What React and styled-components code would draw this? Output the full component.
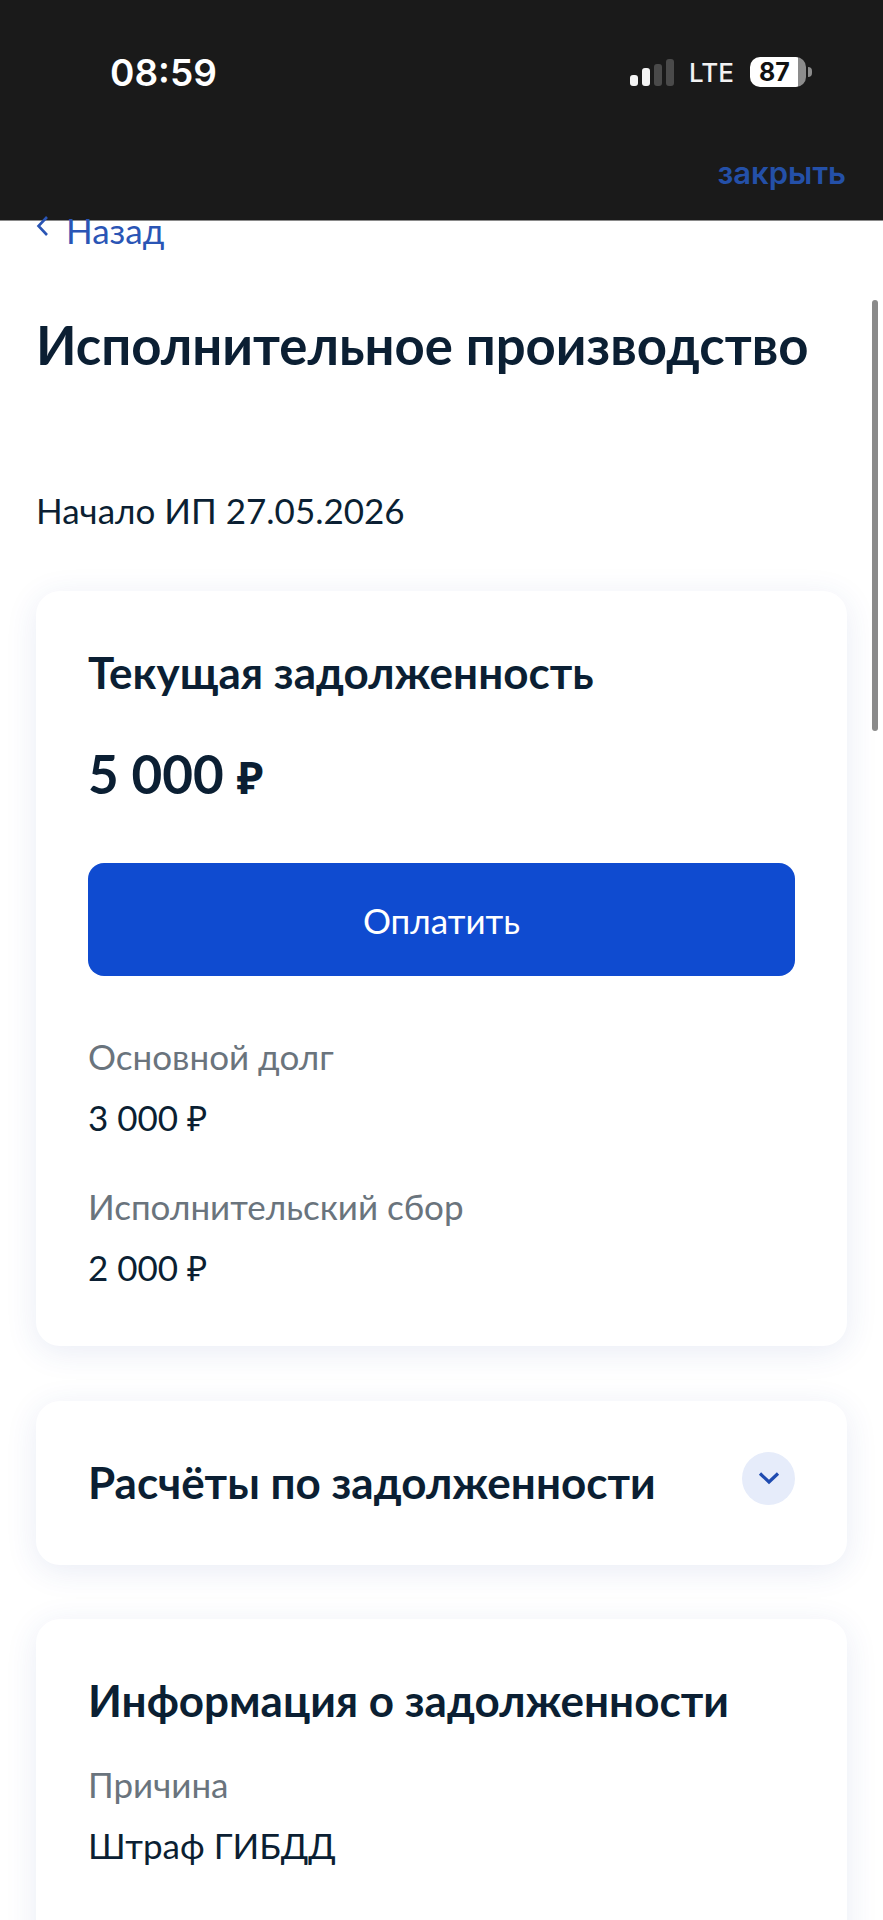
import styled, { createGlobalStyle } from "styled-components";

const GlobalStyle = createGlobalStyle`
  html, body {
    margin: 0;
    padding: 0;
    background: #fff;
  }
  body {
    font-family: "Lato", "Noto Sans", sans-serif;
    color: #0b1f33;
  }
`;

const App = () => {
  return (
    <Page>
      <GlobalStyle />
      <TopBar>
        <StatusRow>
          <Time>08:59</Time>
          <StatusIcons>
            <Signal>
              <Bar h={11} on={true} />
              <Bar h={18} on={true} />
              <Bar h={22} />
              <Bar h={27} />
            </Signal>
            <Lte>LTE</Lte>
            <Battery>
              <BatteryBody>87</BatteryBody>
              <BatteryCap />
            </Battery>
          </StatusIcons>
        </StatusRow>
        <CloseRow>
          <CloseLink>закрыть</CloseLink>
        </CloseRow>
      </TopBar>
      <Content>
        <Back>
          <svg width="16" height="22" viewBox="0 0 16 22" fill="none">
            <path d="M12 2L3.5 11L12 20" stroke="#2a55b5" strokeWidth="2.6" />
          </svg>
          <span>Назад</span>
        </Back>
        <Title>Исполнительное производство</Title>
        <StartDate>Начало ИП 27.05.2026</StartDate>
        <Card>
          <CardTitle>Текущая задолженность</CardTitle>
          <Amount>
            5 000 <span>₽</span>
          </Amount>
          <PayButton>Оплатить</PayButton>
          <Label>Основной долг</Label>
          <Value>3 000 ₽</Value>
          <Label top={49}>Исполнительский сбор</Label>
          <Value>2 000 ₽</Value>
        </Card>
        <AccordionCard>
          <SectionTitle>Расчёты по задолженности</SectionTitle>
          <ChevronCircle>
            <svg width="22" height="14" viewBox="0 0 22 14" fill="none">
              <path d="M2 2.5L11 11L20 2.5" stroke="#1f4bb0" strokeWidth="3.2" />
            </svg>
          </ChevronCircle>
        </AccordionCard>
        <InfoCard>
          <SectionTitle>Информация о задолженности</SectionTitle>
          <Label top={40}>Причина</Label>
          <Value>Штраф ГИБДД</Value>
        </InfoCard>
      </Content>
      <Scrollbar />
    </Page>
  );
};

const Page = styled.div`
  position: relative;
  width: 883px;
  height: 1920px;
  overflow: hidden;
  background: #fff;
`;
const TopBar = styled.div`
  height: 221px;
  box-sizing: border-box;
  background: #1a1a1a;
  border-bottom: 1px solid #8a8a8a;
  display: flex;
  flex-direction: column;
`;
const StatusRow = styled.div`
  display: flex;
  justify-content: space-between;
  align-items: center;
  padding: 48px 71px 0 110px;
  height: 48px;
`;
const Time = styled.div`
  font-family: "Inter", sans-serif;
  font-size: 37px;
  font-weight: 600;
  color: #fff;
`;
const StatusIcons = styled.div`
  display: flex;
  align-items: center;
  gap: 15px;
`;
const Signal = styled.div`
  display: flex;
  align-items: flex-end;
  gap: 4px;
  height: 27px;
`;
const Bar = styled.div`
  width: 8px;
  height: ${(props) => props.h}px;
  border-radius: 3px;
  background: ${(props) => (props.on ? "#f4f4f4" : "#4a4a4a")};
`;
const Lte = styled.div`
  font-family: "Inter", sans-serif;
  font-size: 26px;
  font-weight: 500;
  color: #f2f2f2;
`;
const Battery = styled.div`
  display: flex;
  align-items: center;
  gap: 2px;
  margin-left: 1px;
`;
const BatteryBody = styled.div`
  width: 56px;
  height: 30px;
  border-radius: 10px;
  background: linear-gradient(90deg, #fff 86%, #8c8c8c 86%);
  color: #111;
  font-family: "Inter", sans-serif;
  font-size: 25px;
  font-weight: 700;
  line-height: 30px;
  padding-left: 9px;
  box-sizing: border-box;
`;
const BatteryCap = styled.div`
  width: 4px;
  height: 10px;
  border-radius: 0 4px 4px 0;
  background: #8c8c8c;
`;
const CloseRow = styled.div`
  display: flex;
  justify-content: flex-end;
  padding: 58px 37px 0 0;
`;
const CloseLink = styled.div`
  font-family: "Inter", sans-serif;
  font-size: 31px;
  font-weight: 600;
  color: #2450a8;
`;
const Content = styled.div`
  padding: 0 36px;
`;
const Back = styled.div`
  display: flex;
  align-items: flex-start;
  gap: 15px;
  height: 36px;
  margin-top: -11px;
  margin-left: -1px;
  font-size: 35px;
  line-height: 40px;
  color: #2a55b5;
  & > svg {
    margin-top: 5px;
  }
`;
const Title = styled.h1`
  margin: 69px 0 0;
  font-size: 52.7px;
  line-height: 60px;
  font-weight: 700;
  color: #0b1f33;
`;
const StartDate = styled.div`
  margin-top: 115px;
  font-size: 35px;
  line-height: 40px;
`;
const Card = styled.div`
  margin-top: 61px;
  padding: 57px 52px 0;
  height: 755px;
  box-sizing: border-box;
  background: #fff;
  border-radius: 24px;
  box-shadow: 0 6px 32px rgba(35, 70, 160, 0.1);
`;
const CardTitle = styled.div`
  font-size: 44px;
  line-height: 48px;
  font-weight: 700;
`;
const Amount = styled.div`
  margin-top: 46px;
  font-size: 53px;
  line-height: 64px;
  font-weight: 700;
  & > span {
    font-family: "Noto Sans", sans-serif;
    font-size: 44px;
  }
`;
const PayButton = styled.div`
  margin-top: 54px;
  height: 113px;
  border-radius: 16px;
  background: #0f4bd0;
  color: #fff;
  font-size: 35px;
  display: flex;
  align-items: center;
  justify-content: center;
`;
const Label = styled.div`
  margin-top: ${(props) => props.top || 60}px;
  font-size: 35px;
  line-height: 40px;
  color: #6a747d;
`;
const Value = styled.div`
  margin-top: 21px;
  font-size: 35px;
  line-height: 40px;
  color: #0b1f33;
`;
const AccordionCard = styled.div`
  margin-top: 55px;
  height: 164px;
  padding: 0 52px 3px;
  box-sizing: border-box;
  background: #fff;
  border-radius: 24px;
  box-shadow: 0 6px 32px rgba(35, 70, 160, 0.1);
  display: flex;
  align-items: center;
  justify-content: space-between;
`;
const SectionTitle = styled.div`
  font-size: 44px;
  line-height: 48px;
  font-weight: 700;
`;
const ChevronCircle = styled.div`
  width: 53px;
  height: 53px;
  margin-top: -7px;
  border-radius: 50%;
  background: #e6ecfa;
  display: flex;
  align-items: center;
  justify-content: center;
`;
const InfoCard = styled.div`
  margin-top: 54px;
  padding: 57px 52px 60px;
  height: 400px;
  box-sizing: border-box;
  background: #fff;
  border-radius: 24px;
  box-shadow: 0 6px 32px rgba(35, 70, 160, 0.1);
`;
const Scrollbar = styled.div`
  position: absolute;
  top: 300px;
  right: 5px;
  width: 6px;
  height: 431px;
  border-radius: 3px;
  background: #8a8a8a;
`;

export default App;
